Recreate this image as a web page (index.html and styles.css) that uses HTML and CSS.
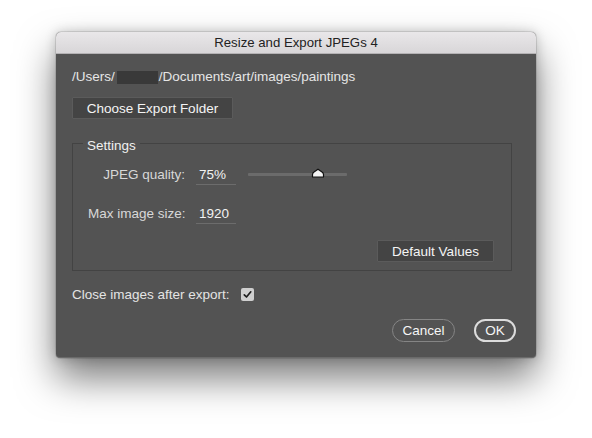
FILE: index.html
```html
<!DOCTYPE html>
<html lang="en">
<head>
<meta charset="utf-8">
<title>Resize and Export JPEGs 4</title>
<link rel="stylesheet" href="styles.css">
</head>
<body>
<div class="window">
  <div class="titlebar">Resize and Export JPEGs 4</div>
  <div class="content">
    <div class="path">/Users/<span class="redact"></span>/Documents/art/images/paintings</div>
    <button class="btn btn-folder">Choose Export Folder</button>
    <div class="group">
      <div class="group-label">Settings</div>
      <div class="row">
        <span class="label">JPEG quality:</span>
        <span class="field">75%</span>
        <div class="slider">
          <div class="track"></div>
          <svg class="thumb" width="14" height="10" viewBox="0 0 14 10">
            <path d="M1.5 9 L1.5 6.5 Q1.5 5 3 4 L7 1.2 L11 4 Q12.5 5 12.5 6.5 L12.5 9 Z" fill="#f4f4f4" stroke="#111" stroke-width="1.2" stroke-linejoin="round"/>
          </svg>
        </div>
      </div>
      <div class="row row2">
        <span class="label">Max image size:</span>
        <span class="field">1920</span>
      </div>
      <div class="group-actions">
        <button class="btn btn-default">Default Values</button>
      </div>
    </div>
    <div class="close-row">
      <span>Close images after export:</span>
      <span class="checkbox">
        <svg width="13" height="13" viewBox="0 0 13 13">
          <path d="M3.3 6.8 L5.5 9 L9.8 3.8" fill="none" stroke="#1e1e1e" stroke-width="1.7" stroke-linecap="round" stroke-linejoin="round"/>
        </svg>
      </span>
    </div>
    <div class="actions">
      <button class="pill pill-cancel">Cancel</button>
      <button class="pill pill-ok">OK</button>
    </div>
  </div>
</div>
</body>
</html>
```
FILE: styles.css
```css
html, body {
  margin: 0;
  padding: 0;
  background: #ffffff;
}
body {
  font-family: "Liberation Sans", Arial, Helvetica, sans-serif;
  font-size: 13.5px;
  width: 592px;
  height: 438px;
  overflow: hidden;
}
.window {
  width: 480px;
  height: 326px;
  box-sizing: border-box;
  margin: 32px 0 0 56px;
  border-radius: 5px 5px 4px 4px;
  overflow: hidden;
  background: #535353;
  border-bottom: 1px solid #6a6a6a;
  box-shadow: 0 20px 38px rgba(0,0,0,0.52), 0 0 12px rgba(0,0,0,0.2), 0 0 0 1px rgba(0,0,0,0.1);
  display: flex;
  flex-direction: column;
}
.titlebar {
  height: 21px;
  line-height: 21px;
  text-align: center;
  font-size: 13.2px;
  color: #222;
  background: linear-gradient(#e9e7e9, #d8d6d8);
  border-bottom: 1px solid #b4b2b4;
  flex: none;
}
.content {
  padding: 15px 24px 0 16px;
  color: #e6e6e6;
  display: flex;
  flex-direction: column;
  align-items: flex-start;
  flex: 1;
}
.path {
  height: 16px;
  line-height: 16px;
  display: flex;
  align-items: center;
  white-space: nowrap;
}
.redact {
  display: inline-block;
  width: 41px;
  height: 13px;
  margin: 0 1px 0 2px;
  background: #393939;
}
.btn {
  font-family: inherit;
  font-size: 13.5px;
  color: #f4f4f4;
  background: #444444;
  border: 1px solid #5b5b5b;
  border-radius: 1px;
  height: 22px;
  padding: 0;
  margin: 0;
  white-space: nowrap;
}
.btn-folder {
  margin-top: 12px;
  width: 161px;
}
.group {
  margin-top: 24px;
  border: 1px solid #434343;
  width: 440px;
  box-sizing: border-box;
  padding: 0 16px 8px 15px;
  display: flex;
  flex-direction: column;
}
.group-label {
  align-self: flex-start;
  margin: -6px 0 0 -5px;
  padding: 0 4px;
  height: 16px;
  line-height: 16px;
  background: #535353;
  color: #f0f0f0;
}
.row {
  display: flex;
  align-items: center;
  height: 21px;
  margin-top: 10px;
}
.row2 {
  margin-top: 18px;
}
.label {
  flex: none;
  width: 97px;
  text-align: right;
  white-space: nowrap;
  color: #d8d8d8;
}
.field {
  flex: none;
  width: 40px;
  height: 20px;
  line-height: 20px;
  margin-left: 11px;
  padding-left: 3px;
  box-sizing: border-box;
  border-bottom: 1px solid #6c6c6c;
  color: #f2f2f2;
}
.slider {
  position: relative;
  flex: none;
  margin-left: 12px;
  width: 99px;
  height: 10px;
  display: flex;
  align-items: center;
}
.track {
  width: 99px;
  height: 3px;
  background: #6b6b6b;
  border-radius: 1px;
}
.thumb {
  position: absolute;
  left: 63px;
  top: -2px;
}
.group-actions {
  display: flex;
  justify-content: flex-end;
  margin-top: 16px;
  margin-right: 1px;
}
.btn-default {
  width: 117px;
}
.close-row {
  margin-top: 15px;
  height: 16px;
  display: flex;
  align-items: center;
  white-space: nowrap;
  color: #e4e4e4;
}
.checkbox {
  flex: none;
  margin-left: 11px;
  width: 13px;
  height: 13px;
  border-radius: 2px;
  background: #cfcfcf;
  display: flex;
}
.actions {
  margin-top: 17px;
  align-self: stretch;
  display: flex;
  justify-content: flex-end;
  gap: 19px;
  margin-right: -4px;
}
.pill {
  font-family: inherit;
  font-size: 13.5px;
  color: #f6f6f6;
  background: #535353;
  height: 23px;
  border-radius: 12px;
  padding: 0;
  margin: 0;
}
.pill-cancel {
  width: 63px;
  border: 1px solid #858585;
}
.pill-ok {
  width: 42px;
  border: 2px solid #dcdcdc;
}
```
